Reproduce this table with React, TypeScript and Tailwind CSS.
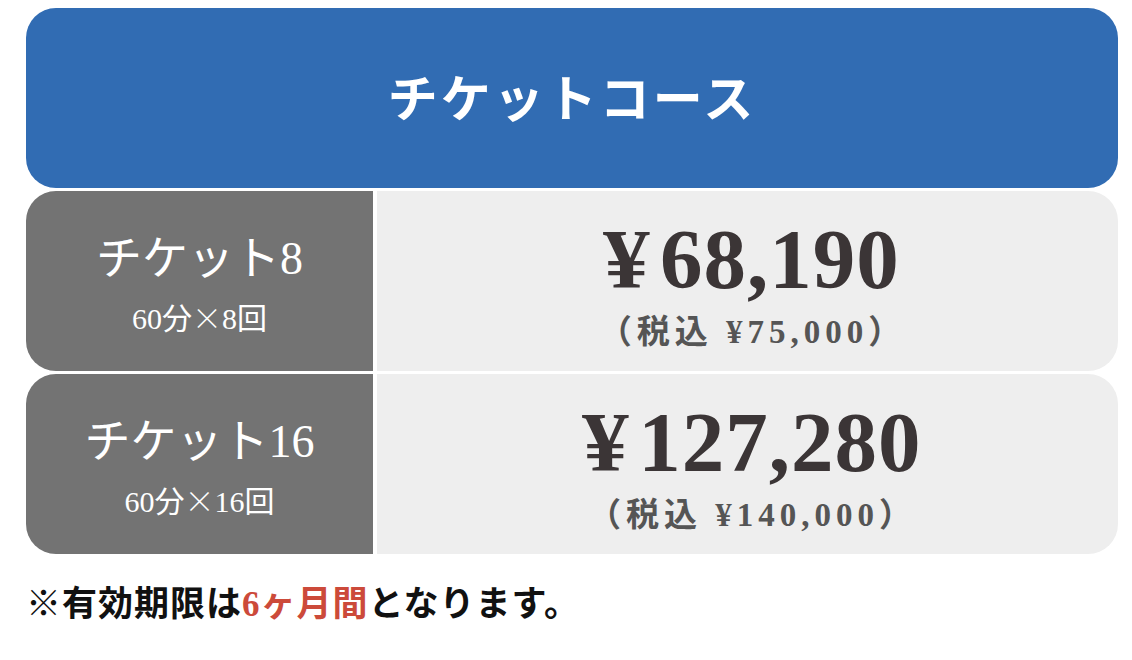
import React from 'react';

interface Course {
  name: string;
  detail: string;
  count: string;
  price: string;
  taxIncluded: string;
}

const courses: Course[] = [
  { name: 'チケット8', detail: '60分', count: '8回', price: '68,190', taxIncluded: '75,000' },
  { name: 'チケット16', detail: '60分', count: '16回', price: '127,280', taxIncluded: '140,000' },
];

const serif = "font-['Liberation_Serif','Noto_Sans_CJK_JP',serif]";

const CourseRow: React.FC<{ course: Course }> = ({ course }) => (
  <div className="flex h-[180px]">
    <div className="flex w-[347px] flex-col items-center justify-center rounded-l-[30px] bg-[#737373] text-white">
      <div className="text-[46px] leading-[56px] pt-[6px]">{course.name}</div>
      <div className="text-[30px] leading-[38px] mt-[10px]">
        {course.detail}
        <span className="font-['Noto_Sans_CJK_JP',sans-serif] font-light">×</span>
        {course.count}
      </div>
    </div>
    <div className="ml-[4px] flex flex-1 flex-col items-center justify-center rounded-r-[30px] bg-[#eeeeee] pt-[6px] pl-[10px]">
      <div className="flex items-baseline text-[85px] leading-[86px] font-bold text-[#3b3536]">
        <span className="mr-[12px] scale-x-110">¥</span>
        <span className="tracking-[1px]">{course.price}</span>
      </div>
      <div className="text-[33px] leading-[40px] font-bold tracking-[5px] text-[#555555] mt-[10px]">
        （税込 ¥{course.taxIncluded}）
      </div>
    </div>
  </div>
);

export default function App() {
  return (
    <div className={`min-h-[660px] w-[1132px] bg-white pt-[8px] pl-[26px] pr-[14px] ${serif}`}>
      <div className="flex h-[180px] items-center justify-center rounded-[30px] bg-[#316cb3]">
        <h1 className="text-[50px] font-bold tracking-[3px] text-white pt-[4px]">チケットコース</h1>
      </div>
      <div className="mt-[3px] flex flex-col gap-[3px]">
        {courses.map((c) => (
          <CourseRow key={c.name} course={c} />
        ))}
      </div>
      <p className="mt-[30px] text-[35px] leading-[42px] font-bold tracking-[1px] text-[#111111]">
        ※有効期限は<span className="text-[#cc4a3a]">6ヶ月間</span>となります。
      </p>
    </div>
  );
}
